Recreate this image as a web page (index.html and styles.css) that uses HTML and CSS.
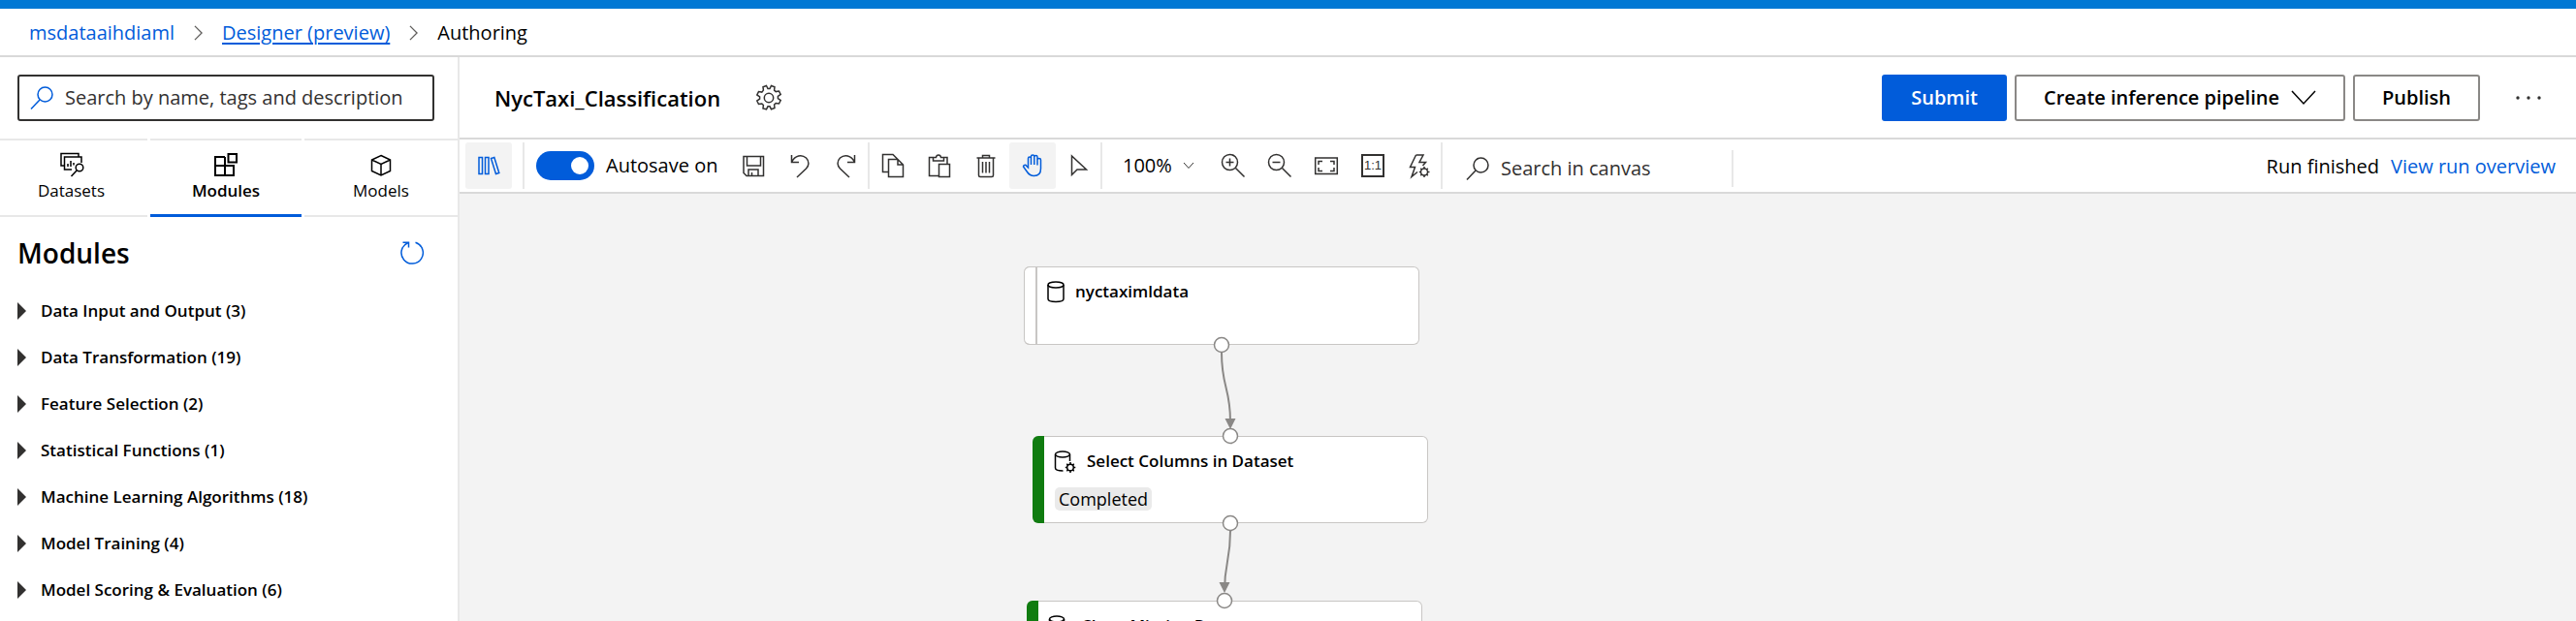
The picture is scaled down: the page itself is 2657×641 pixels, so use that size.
FILE: index.html
```html
<!DOCTYPE html>
<html lang="en">
<head>
<meta charset="utf-8">
<title>Designer - Authoring</title>
<link rel="stylesheet" href="styles.css">
</head>
<body>
<div class="app">
  <div class="brandbar"></div>
  <nav class="breadcrumb" aria-label="Breadcrumb">
    <a class="crumb" href="#">msdataaihdiaml</a>
    <svg class="crumb-sep" viewBox="0 0 10 18"><path d="M1 1l8 8-8 8"/></svg>
    <a class="crumb crumb-active" href="#">Designer (preview)</a>
    <svg class="crumb-sep" viewBox="0 0 10 18"><path d="M1 1l8 8-8 8"/></svg>
    <span>Authoring</span>
  </nav>
  <div class="workspace">
    <aside class="sidebar">
      <div class="search-wrap">
        <label class="search-box">
          <svg class="icon blue" viewBox="0 0 24 24"><circle cx="15.500" cy="8.500" r="7.500"/><path d="M10 14L1 23.500"/></svg>
          <input class="search-input" type="text" aria-label="Search modules" placeholder="Search by name, tags and description">
        </label>
      </div>
      <div class="tabs" role="tablist">
        <button class="tab" role="tab">
          <svg class="icon dark" viewBox="0 0 24 24"><path d="M4 13H1V.5h18V4M12 17H4.500V4H22v6M8 14v-3M11 14V8M14 12.500V10"/><circle cx="20" cy="15" r="3.800"/><path d="M17.300 17.700L11.500 24"/></svg>
          <span>Datasets</span>
        </button>
        <button class="tab tab-active" role="tab" aria-selected="true">
          <svg class="icon dark bold" viewBox="0 0 24 24"><path d="M11 4H1v19h19V13H1M11 4v19M14.500 1H23v8.500h-8.500z"/></svg>
          <span>Modules</span>
        </button>
        <button class="tab" role="tab">
          <svg class="icon dark" viewBox="0 0 24 24"><path d="M12 2.500l9.500 4.500v11.500L12 23l-9.500-4.500V7zM2.500 7l9.500 4.500L21.500 7M12 11.500V23"/></svg>
          <span>Models</span>
        </button>
      </div>
      <div class="panel-head">
        <h2 class="panel-title">Modules</h2>
        <button class="refresh" aria-label="Refresh"><svg class="icon blue" viewBox="0 0 24 24"><path d="M15.500 1.200A11.200 11.200 0 1 1 7.500 1.700M2.500 1.200H8.500V6.500"/></svg></button>
      </div>
      <ul class="tree">
        <li><button class="tree-item"><span class="caret"></span>Data Input and Output (3)</button></li>
        <li><button class="tree-item"><span class="caret"></span>Data Transformation (19)</button></li>
        <li><button class="tree-item"><span class="caret"></span>Feature Selection (2)</button></li>
        <li><button class="tree-item"><span class="caret"></span>Statistical Functions (1)</button></li>
        <li><button class="tree-item"><span class="caret"></span>Machine Learning Algorithms (18)</button></li>
        <li><button class="tree-item"><span class="caret"></span>Model Training (4)</button></li>
        <li><button class="tree-item"><span class="caret"></span>Model Scoring &amp; Evaluation (6)</button></li>
      </ul>
    </aside>
    <main class="main">
      <header class="header">
        <h1 class="title">NycTaxi_Classification</h1>
        <button class="gear" aria-label="Settings"><svg class="icon-lg" viewBox="0 0 28 28"><path d="M11.500 1.500l1.500 3h2l1.500-3 3.500 1.200-.4 3.400 1.600 1.500 3.300-.5 1.700 3.300-2.800 2v2.200l2.800 2-1.700 3.400-3.300-.5-1.600 1.500.4 3.500-3.500 1.300-1.500-3h-2l-1.500 3L8 25l.4-3.500-1.600-1.500-3.300.5-1.700-3.400 2.800-2v-2.200l-2.800-2 1.700-3.300 3.300.5L8.400 6.100 8 2.700z"/><circle cx="14" cy="14" r="4.700"/></svg></button>
        <div class="actions">
          <button class="btn btn-primary">Submit</button>
          <button class="btn">Create inference pipeline<svg class="btn-chevron" viewBox="0 0 26 16"><path d="M1 1l12 13L25 1"/></svg></button>
          <button class="btn">Publish</button>
          <button class="more" aria-label="More"><svg class="dots" viewBox="0 0 26 4"><circle cx="2" cy="2" r="1.700"/><circle cx="13" cy="2" r="1.700"/><circle cx="24" cy="2" r="1.700"/></svg></button>
        </div>
      </header>
      <div class="toolbar">
        <div class="group group-first">
          <button class="tool tool-on" aria-label="Library"><svg class="icon blue" viewBox="0 0 24 24"><path d="M2 3.500h3.500v17H2zM8.500 3.500H12v17H8.500zM14.500 4.500l3.300-1 5 16-3.300 1z"/></svg></button>
        </div>
        <div class="group">
          <label class="autosave"><input class="toggle" type="checkbox" role="switch" checked>Autosave on</label>
          <button class="tool" aria-label="Save"><svg class="icon" viewBox="0 0 24 24"><path d="M2 2.500h20.500v20H5l-3-3zM5.500 2.500v9.500h14V2.500M7 22.500V16h10v6.500M10.500 22.500V19"/></svg></button>
          <button class="tool" aria-label="Undo"><svg class="icon" viewBox="0 0 24 24"><path d="M3.500 1v7.500h7.500M3.500 8.500C7 1 14 0 18.500 4c3.500 3.500 3 8 0 11L9 24"/></svg></button>
          <button class="tool" aria-label="Redo"><svg class="icon" viewBox="0 0 24 24"><path d="M20.500 1v7.500h-7.500M20.500 8.500C17 1 10 0 5.500 4c-3.500 3.500-3 8 0 11L15 24"/></svg></button>
        </div>
        <div class="group">
          <button class="tool" aria-label="Copy"><svg class="icon" viewBox="0 0 24 24"><path d="M7 18.500H1.500v-18H12l5 5M7.500 5.500H17l5.500 5.500v12.500h-15zM17 5.500V11h5.500"/></svg></button>
          <button class="tool" aria-label="Paste"><svg class="icon" viewBox="0 0 24 24"><path d="M11 22.500H1.500v-19H6M16 3.500h4V10M5.500 3.500h3c.5-3.500 4.500-3.500 5 0h3V7h-11zM11.500 10.500h11v13h-11z"/></svg></button>
          <button class="tool" aria-label="Delete"><svg class="icon" viewBox="0 0 24 24"><path d="M2.500 4h19M8.500 4V1.500h7V4M4.500 4v18q0 1.500 1.500 1.500h12q1.500 0 1.500-1.500V4M8.500 8v11.500M12 8v11.500M15.500 8v11.500"/></svg></button>
          <button class="tool tool-on" aria-label="Pan"><svg class="icon blue" viewBox="0 0 24 24"><path d="M7.500 14V4.500c0-2 3-2 3 0V11 2.500c0-2 3.300-2 3.300 0V11 3c0-2 3.200-2 3.200 0v8.500V6c0-2 3.500-2 3.500 0v9c0 5-3 7.500-7 7.500-3.500 0-5-1-7-4L2.500 13c0-1.500 2-2.500 3.500-.5z"/></svg></button>
          <button class="tool" aria-label="Select"><svg class="icon" viewBox="0 0 24 24"><path d="M4.500 2v19.500l5.500-5.500h9.500z"/></svg></button>
        </div>
        <div class="group">
          <button class="zoom">100%<svg class="zoom-chevron" viewBox="0 0 12 8"><path d="M1 1l5 5.500L11 1"/></svg></button>
          <button class="tool" aria-label="Zoom in"><svg class="icon" viewBox="0 0 24 24"><circle cx="8.500" cy="8.500" r="8"/><path d="M14.500 14.500l9 9M4.500 8.500h8M8.500 4.500v8"/></svg></button>
          <button class="tool" aria-label="Zoom out"><svg class="icon" viewBox="0 0 24 24"><circle cx="8.500" cy="8.500" r="8"/><path d="M14.500 14.500l9 9M4.500 8.500h8"/></svg></button>
          <button class="tool" aria-label="Fit"><svg class="icon" viewBox="0 0 24 24"><path d="M.7 4h22.600v16.500H.7zM8 7.500H4V11M16 7.500h4V11M8 17.500H4V14M16 17.500h4V14"/></svg></button>
          <button class="tool" aria-label="Actual size"><span class="actual">1:1</span></button>
          <button class="tool" aria-label="Run settings"><svg class="icon" viewBox="0 0 24 24"><path d="M8.500 1h7.500l-4 7.500h6.500l-3 3.500M8.500 1L2.500 13.500h5L4 23.500l6-5"/><circle cx="17" cy="18.500" r="3.500"/><path d="M17 13v2M17 22v2M11.800 18.500h2M20.500 18.500h2M13.300 14.800l1.300 1.300M19.500 21l1.300 1.300M13.300 22.300l1.300-1.300M19.500 16l1.300-1.300"/></svg></button>
        </div>
        <label class="canvas-search">
          <svg class="icon" viewBox="0 0 24 24"><circle cx="15.500" cy="8.500" r="7.500"/><path d="M10 14L1 23.500"/></svg>
          <input class="search-input" type="text" aria-label="Search in canvas" placeholder="Search in canvas">
        </label>
        <div class="status"><span>Run finished</span><a class="crumb" href="#">View run overview</a></div>
      </div>
      <section class="canvas" aria-label="Pipeline canvas">
        <article class="node node-data">
          <div class="node-head"><svg class="icon dark" viewBox="0 0 24 24"><ellipse cx="12" cy="5" rx="8" ry="3"/><path d="M4 5v14.500c0 4 16 4 16 0V5"/></svg><span>nyctaximldata</span></div>
        </article>
        <article class="node node-select node-done">
          <div class="node-head"><svg class="icon dark" viewBox="0 0 24 24"><ellipse cx="10" cy="5" rx="7.500" ry="3"/><path d="M2.500 5v14c0 2 3 3 8 3M17.500 5v7"/><circle cx="18" cy="18.500" r="3.300"/><path d="M18 13v2M18 22v2M12.800 18.500h2M21.300 18.500h2M14.300 14.800l1.300 1.300M20.500 21l1.300 1.300M14.300 22.300l1.300-1.300M20.500 16l1.300-1.300"/></svg><span>Select Columns in Dataset</span></div>
          <span class="badge">Completed</span>
        </article>
        <article class="node node-clean node-done">
          <div class="node-head"><svg class="icon dark" viewBox="0 0 24 24"><ellipse cx="10" cy="5" rx="7.500" ry="3"/><path d="M2.500 5v14c0 2 3 3 8 3M17.500 5v7"/><circle cx="18" cy="18.500" r="3.300"/></svg><span>Clean Missing Data</span></div>
        </article>
        <svg class="edges" viewBox="0 0 440 360">
          <path class="edge" d="M204 89C204 125 213 125 213 160M213 273C213 305 207 305 207 335"/>
          <path class="arrow" d="M207.500 157h11L213 168zM201.500 326h11L207 337z"/>
          <circle cx="204" cy="81" r="7.500"/><circle cx="213" cy="175" r="7.500"/><circle cx="213" cy="265" r="7.500"/><circle cx="207" cy="345" r="7.500"/>
        </svg>
      </section>
    </main>
  </div>
</div>
</body>
</html>
```
FILE: styles.css
```css
*, *::before { box-sizing: border-box; }
body {
  margin: 0;
  font: 20px/28px "Open Sans", "Noto Sans", sans-serif;
  color: #000;
  background: #fff;
}
button, input { font: inherit; color: inherit; }
button { padding: 0; border: 0; background: none; cursor: pointer; }
svg { display: block; flex: none; fill: none; stroke: #323130; stroke-width: 1.5; overflow: visible; }
.app { display: flex; flex-direction: column; height: 100vh; overflow: hidden; }
.brandbar { flex: none; height: 9px; background: #0078d4; }
.breadcrumb {
  flex: none; display: flex; align-items: center; gap: 20px;
  height: 50px; padding: 2px 30px 0; border-bottom: 2px solid #d9d9d9;
}
.crumb { color: #015cda; text-decoration: none; }
.crumb-active { text-decoration: underline; text-decoration-thickness: 2px; text-underline-offset: 3px; }
.crumb-sep { width: 9px; height: 16px; stroke: #605e5c; }
.workspace { flex: 1; display: flex; min-height: 0; }

.sidebar { flex: none; width: 474px; border-right: 2px solid #e8e8e8; overflow: hidden; }
.search-wrap { padding: 18px 24px 18px 18px; }
.search-box {
  display: flex; align-items: center; gap: 12px; height: 48px; padding: 0 11px;
  border: 2px solid #323130; border-radius: 3px;
}
.search-input { flex: 1; min-width: 0; padding: 0; border: 0; outline: 0; background: none; }
.search-input::placeholder { color: #323130; opacity: 1; }
.icon { width: 24px; height: 24px; }
.icon-lg { width: 28px; height: 28px; }
.blue { stroke: #015cda; }
.dark { stroke: #000; }
.bold { stroke-width: 2; }
.tabs { display: grid; grid-template-columns: 152fr 156fr 158fr; gap: 3px; }
.tab {
  display: flex; flex-direction: column; align-items: center; gap: 2px;
  height: 81px; padding-top: 13px; font-size: 17px; line-height: 26px;
  border-top: 2px solid #e8e8e8; border-bottom: 2px solid #e8e8e8;
}
.tab:first-child { padding-right: 5px; }
.tab-active { font-weight: 600; border-bottom: 3px solid #015cda; }
.panel-head { display: flex; align-items: center; justify-content: space-between; padding: 17px 35px 16px 18px; }
.panel-title { margin: 0; font-size: 28px; line-height: 40px; font-weight: 600; }
.tree { margin: 0; padding: 0; list-style: none; }
.tree-item {
  display: flex; align-items: center; gap: 15px; width: 100%; height: 48px;
  padding-left: 18px; font-size: 17px; font-weight: 600; text-align: left;
}
.caret { border: solid transparent; border-width: 9px 0 9px 9px; border-left-color: #323130; }

.main { flex: 1; display: flex; flex-direction: column; min-width: 0; }
.header { flex: none; display: flex; align-items: center; height: 85px; padding: 0 36px; border-bottom: 2px solid #d9d9d9; }
.title { margin: 0 36px 0 0; font-size: 22px; font-weight: 600; }
.actions { display: flex; align-items: center; gap: 8px; margin-left: auto; }
.btn {
  display: flex; align-items: center; gap: 12px; height: 48px; padding: 0 28px;
  border: 2px solid #8a8886; border-radius: 3px; font-weight: 600;
}
.btn-primary { color: #fff; background: #015cda; border-color: #015cda; }
.btn-chevron { width: 26px; height: 16px; stroke: #000; }
.more { padding: 12px 0 12px 29px; }
.dots { width: 26px; height: 4px; stroke: none; fill: #323130; }

.toolbar { flex: none; display: flex; align-items: center; height: 56px; padding: 0 21px 0 6px; border-bottom: 2px solid #d9d9d9; }
.group { display: flex; align-items: center; height: 48px; box-shadow: inset -2px 0 #e8e8e8; }
.group-first { padding-right: 13px; margin-right: 12px; }
.tool { display: flex; align-items: center; justify-content: center; width: 48px; height: 48px; border-radius: 3px; }
.tool-on { background: #f3f3f3; }
.autosave { display: flex; align-items: center; gap: 12px; width: 200px; white-space: nowrap; }
.toggle {
  appearance: none; display: flex; align-items: center; justify-content: flex-end;
  width: 60px; height: 30px; margin: 0; padding: 0 6px; border-radius: 15px; background: #015cda;
}
.toggle::before { content: ""; width: 18px; height: 18px; border-radius: 50%; background: #fff; }
.zoom { display: flex; align-items: center; justify-content: space-between; width: 111px; padding: 0 16px 0 21px; }
.zoom-chevron { width: 12px; height: 8px; stroke-width: 1; }
.actual {
  width: 24px; height: 24px; border: 2px solid #323130; color: #323130;
  font: 13px/20px "Liberation Sans", sans-serif; text-align: center;
}
.canvas-search { display: flex; align-items: center; gap: 12px; width: 300px; height: 38px; margin-top: 6px; padding-left: 24px; border-right: 2px solid #e8e8e8; }
.status { display: flex; gap: 12px; margin-left: auto; padding-top: 2px; white-space: nowrap; }

.canvas { flex: 1; position: relative; overflow: hidden; background: #f3f3f3; }
.node {
  position: absolute; width: 408px; min-height: 81px; padding: 12px 12px 8px 10px;
  background: #fff; border: 1px solid #c8c6c4; border-left: 0; border-radius: 6px;
}
.node::before { content: ""; position: absolute; left: 0; top: -1px; bottom: -1px; width: 14px; border: 1px solid #c8c6c4; border-right-width: 2px; border-radius: 6px 0 0 6px; }
.node-done { min-height: 90px; }
.node-done::before { width: 12px; border: 0; background: #107c10; }
.node-data { left: 582px; top: 75px; padding-left: 21px; }
.node-select { left: 591px; top: 250px; padding-left: 21px; }
.node-clean { left: 585px; top: 420px; padding-left: 21px; }
.node-head { display: flex; align-items: center; gap: 8px; font-size: 17px; line-height: 26px; font-weight: 600; }
.node-done .node-head { gap: 11px; }
.badge { display: block; width: fit-content; margin: 14px 0 0 2px; padding: 0 4px; border-radius: 5px; background: #eaeaea; font-size: 18px; line-height: 24px; }
.edges { position: absolute; left: 582px; top: 75px; width: 440px; height: 360px; stroke: #8a8886; fill: #fff; }
.edge { fill: none; stroke-width: 2; }
.arrow { fill: #8a8886; stroke: none; }
```
